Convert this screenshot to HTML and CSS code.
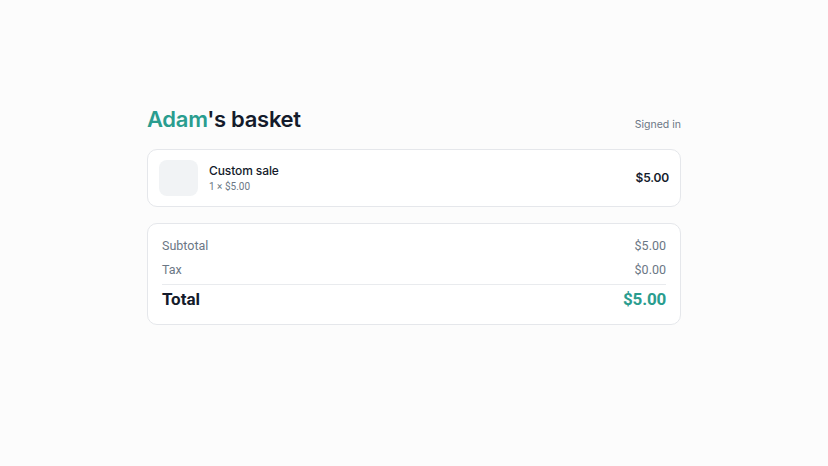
FILE: index.html
```html
<!DOCTYPE html>
<html lang="en">
<head>
    <meta charset="UTF-8">
    <meta name="viewport" content="width=device-width, initial-scale=1.0">
    <title>Basket</title>
    <link rel="stylesheet" href="styles.css">
</head>
<body>

<div class="basket">
    <div class="header">
        <h1><span class="name">Adam</span>'s basket</h1>
        <span class="status">Signed in</span>
    </div>

    <div class="card item">
        <div class="thumb"></div>
        <div class="item-info">
            <div class="item-name">Custom sale</div>
            <div class="item-qty">1 × $5.00</div>
        </div>
        <div class="item-price">$5.00</div>
    </div>

    <div class="card summary">
        <div class="row">
            <span>Subtotal</span>
            <span>$5.00</span>
        </div>
        <div class="row">
            <span>Tax</span>
            <span>$0.00</span>
        </div>
        <div class="row total">
            <span>Total</span>
            <span class="total-value">$5.00</span>
        </div>
    </div>
</div>

</body>
</html>
```

FILE: styles.css
```css
body {
    font-family: 'Inter', 'Roboto', sans-serif;
    margin: 0;
    padding: 105px 0 0;
    background-color: #fcfcfc;
    color: #141b2b;
}
.basket {
    width: 534px;
    margin: 0 auto;
}
.header {
    display: flex;
    justify-content: space-between;
    align-items: flex-end;
    margin-bottom: 15px;
}
h1 {
    margin: 0;
    font-size: 22px;
    line-height: 29px;
    font-weight: 600;
    letter-spacing: -0.3px;
}
.name {
    color: #2a9d8f;
}
.status {
    font-size: 10.5px;
    color: #6b7785;
    margin-bottom: 3px;
}
.card {
    background: #ffffff;
    border: 1px solid #e5e7eb;
    border-radius: 10px;
    box-sizing: border-box;
}
.item {
    display: flex;
    align-items: center;
    gap: 11px;
    padding: 10px 11px;
    height: 58px;
    margin-bottom: 16px;
}
.thumb {
    width: 39px;
    height: 36px;
    border-radius: 8px;
    background: #f1f3f5;
}
.item-info {
    flex: 1;
}
.item-name {
    font-size: 12px;
    font-weight: 500;
    line-height: 16px;
    letter-spacing: -0.1px;
}
.item-qty {
    font-family: 'Roboto', sans-serif;
    font-size: 10px;
    color: #6b7785;
    line-height: 14px;
    margin-top: 1px;
}
.item-price {
    font-size: 12px;
    font-weight: 600;
    letter-spacing: -0.2px;
    margin-bottom: 1px;
}
.summary {
    padding: 10px 14px 12px;
    font-family: 'Roboto', sans-serif;
}
.row {
    display: flex;
    justify-content: space-between;
    font-size: 12.5px;
    color: #6b7785;
    line-height: 24px;
}
.total {
    border-top: 1px solid #e9ebee;
    margin-top: 2px;
    padding-top: 1px;
    font-size: 17px;
    font-weight: 700;
    color: #141b2b;
    line-height: 26px;
}
.total-value {
    color: #2a9d8f;
    letter-spacing: -0.2px;
}
```
